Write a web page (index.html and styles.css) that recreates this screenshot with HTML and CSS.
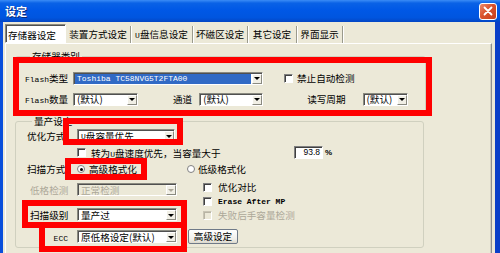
FILE: index.html
```html
<!DOCTYPE html>
<html lang="zh">
<head>
<meta charset="utf-8">
<title>设定</title>
<link rel="stylesheet" href="styles.css">
</head>
<body>
<div class="window">
  <div class="titlebar">
    <span class="title">设定</span>
    <span class="close"><svg width="10" height="10" viewBox="0 0 10 10"><path d="M1.5 1.5 L8.5 8.5 M8.5 1.5 L1.5 8.5" stroke="#fff" stroke-width="1.8" stroke-linecap="round"/></svg></span>
  </div>
  <div class="frame">
    <div class="tabs">
      <div class="tab sel">存储器设定</div>
      <div class="tab">装置方式设定</div>
      <div class="tab"><span class="lat">U</span>盘信息设定</div>
      <div class="tab">坏磁区设定</div>
      <div class="tab">其它设定</div>
      <div class="tab">界面显示</div>
    </div>
    <div class="panel">
      <fieldset class="grp g1">
        <legend>存储器类别</legend>
        <div class="row r1">
          <span class="lbl lw48"><span class="lat">Flash</span>类型</span>
          <div class="sel w190"><span class="val hl"><span class="lat">Toshiba TC58NVG5T2FTA00</span></span><span class="arr"></span></div>
          <span class="cb ml21"></span><span class="txt ml4">禁止自动检测</span>
        </div>
        <div class="row r2">
          <span class="lbl lw48"><span class="lat">Flash</span>数量</span>
          <div class="sel w65"><span class="val">(默认)</span><span class="arr"></span></div>
          <span class="txt ml35">通道</span>
          <div class="sel w64 ml7"><span class="val">(默认)</span><span class="arr"></span></div>
          <span class="txt ml44">读写周期</span>
          <div class="sel w45 ml17"><span class="val">(默认)</span><span class="arr"></span></div>
        </div>
      </fieldset>
      <fieldset class="grp g2">
        <legend>量产设定</legend>
        <div class="row ra">
          <span class="lbl lw50">优化方式</span>
          <div class="sel w98"><span class="val"><span class="lat">U</span>盘容量优先</span><span class="arr"></span></div>
        </div>
        <div class="row rb">
          <span class="lbl lw50"></span>
          <span class="cb"></span><span class="txt ml5 w203"><span>转为<span class="lat">U</span>盘速度优先，当容量大于</span></span>
          <span class="tb">93.8</span><span class="pct">%</span>
        </div>
        <div class="row rc">
          <span class="lbl lw50">扫描方式</span>
          <span class="rd on"></span><span class="txt ml4 w98">高级格式化</span>
          <span class="rd"></span><span class="txt ml3">低级格式化</span>
        </div>
        <div class="cols">
          <div class="lcol">
            <div class="row rd1">
              <span class="lbl lw50 in3 dis">低格检测</span>
              <div class="sel w100 dsel"><span class="val">正常检测</span><span class="arr"></span></div>
            </div>
            <div class="row rg">
              <span class="lbl lw50 in3">扫描级别</span>
              <div class="sel w100"><span class="val">量产过</span><span class="arr"></span></div>
            </div>
          </div>
          <div class="rcol">
            <div class="row rr"><span class="cb"></span><span class="txt ml6">优化对比</span></div>
            <div class="row rr"><span class="cb"></span><span class="txt ml6 lat b">Erase After MP</span></div>
            <div class="row rr"><span class="cb dcb"></span><span class="txt ml6 dis">失败后手容量检测</span></div>
          </div>
        </div>
        <div class="row rh">
          <span class="lbl lw50 rt"><span class="lat">ECC</span></span>
          <div class="sel w100"><span class="val">原低格设定(默认)</span><span class="arr"></span></div>
          <span class="btn">高级设定</span>
        </div>
      </fieldset>
    </div>
  </div>
  <div class="mark m1"></div>
  <div class="mark m2"></div>
  <div class="mark m3"></div>
  <div class="mark m4"></div>
  <div class="mark m5"></div>
</div>
</body>
</html>
```
FILE: styles.css
```css
* { box-sizing: border-box; }
html, body { margin: 0; padding: 0; }
body {
  width: 500px;
  height: 253px;
  overflow: hidden;
  background: #ECE9D8;
  font-family: "Noto Sans CJK SC", "Noto Sans", sans-serif;
  font-size: 9.6px;
  color: #000;
}
.window {
  position: relative;
  width: 500px;
  height: 253px;
  display: flex;
  flex-direction: column;
}
.titlebar {
  height: 22px;
  flex: none;
  display: flex;
  align-items: center;
  justify-content: space-between;
  padding: 0 3px 0 5px;
  background: linear-gradient(#3B8CF6 0%, #0A62E6 14%, #0058E6 45%, #0055DF 80%, #0446C4 100%);
}
.title {
  color: #fff;
  font-weight: bold;
  font-size: 11px;
  text-shadow: 1px 1px #0B2A7A;
}
.close {
  width: 18px;
  height: 17px;
  border: 1px solid #fff;
  border-radius: 3px;
  background: linear-gradient(135deg, #EE8A6C 0%, #D9532E 45%, #C8401C 100%);
  display: flex;
  align-items: center;
  justify-content: center;
}
.frame {
  flex: 1;
  display: flex;
  flex-direction: column;
  border-left: 3px solid #0A4FDB;
  border-right: 5px solid #0A3FC8;
  padding: 0 3px 0 2px;
  min-height: 0;
}
.tabs {
  height: 21px;
  flex: none;
  display: flex;
  align-items: flex-end;
}
.tab {
  height: 17px;
  line-height: 17px;
  text-align: center;
  border-right: 1px solid #9A9A8C;
  box-shadow: 1px 0 0 #fff;
  white-space: nowrap;
}
.tab:nth-child(1) { width: 61px; padding-left: 2px; height: 19px; line-height: 18px; }
.tab:nth-child(2) { width: 65px; }
.tab:nth-child(3) { width: 62px; }
.tab:nth-child(4) { width: 55px; }
.tab:nth-child(5) { width: 49px; }
.tab:nth-child(6) { width: 46px; }
.panel {
  flex: 1;
  border-top: 1px solid #fff;
  border-left: 1px solid #fff;
  border-right: 1px solid #8E8F8F;
  box-shadow: inset -1px 0 0 #D0CEC0;
  padding-left: 9px;
}
.grp {
  margin: 0;
  padding: 0;
  min-width: 0;
  border: 1px solid #D0D0BF;
  border-radius: 3px;
}
.grp legend {
  padding: 0 2px;
  margin-left: 5px;
  line-height: 12px;
  font-size: 9.6px;
}
.g1 {
  margin-top: 6px;
  width: 411px;
  height: 65px;
  padding: 9px 0 0 9px;
}
.g2 {
  width: 409px;
  height: 133px;
  padding: 1px 0 0 11px;
}
.row {
  display: flex;
  align-items: center;
  height: 14px;
  white-space: nowrap;
}
.r2 { margin-top: 7px; }
.ra { height: 13px; margin-top: 1px; }
.rb { height: 13px; margin-top: 4px; }
.rc { height: 12px; margin-top: 4px; }
.cols { display: flex; margin-top: 5px; }
.lcol { width: 176px; }
.rd1 { height: 13px; margin-top: 3px; }
.rg { height: 13px; margin-top: 12px; }
.rr { height: 14px; }
.rh { height: 15px; margin-top: 7px; }
.lbl { flex: none; }
.lw48 { width: 48px; }
.lw50 { width: 50px; }
.in3 { padding-left: 3px; }
.rt { text-align: right; padding-right: 9px; }
.lat { font-family: "Liberation Mono", monospace; font-size: 8px; }
.b { font-weight: bold; }
.dis { color: #ACA899; }
.txt { flex: none; }
.ml3 { margin-left: 3px; }
.ml4 { margin-left: 4px; }
.ml5 { margin-left: 5px; }
.ml6 { margin-left: 6px; }
.ml7 { margin-left: 7px; }
.ml17 { margin-left: 17px; }
.ml21 { margin-left: 21px; }
.ml35 { margin-left: 35px; }
.ml44 { margin-left: 44px; }
.w45 { width: 45px; }
.w64 { width: 64px; }
.w65 { width: 65px; }
.w98 { width: 98px; }
.w100 { width: 100px; }
.w190 { width: 190px; }
.w203 { width: 203px; }
.sel {
  flex: none;
  height: 13px;
  display: flex;
  align-items: stretch;
  background: #fff;
  border: 1px solid;
  border-color: #8A8A80 #fff #fff #8A8A80;
  box-shadow: inset 1px 1px 0 #505050;
  padding: 1px 0 0 1px;
}
.sel .val {
  flex: 1;
  display: flex;
  align-items: center;
  line-height: 11px;
  padding-left: 2px;
  white-space: nowrap;
}
.sel .val.hl {
  background: #316AC5;
  color: #fff;
  margin-right: 1px;
}
.arr {
  flex: none;
  width: 10px;
  background: #F1EFE6;
  border: 1px solid;
  border-color: #fff #8A8A80 #8A8A80 #fff;
  display: flex;
  align-items: center;
  justify-content: center;
}
.arr::after {
  content: "";
  border-left: 3px solid transparent;
  border-right: 3px solid transparent;
  border-top: 3px solid #000;
}
.dsel { background: #ECE9D8; color: #ACA899; }
.dsel .arr::after { border-top-color: #ACA899; }
.cb {
  flex: none;
  width: 9px;
  height: 9px;
  background: #fff;
  border: 1px solid;
  border-color: #808080 #fff #fff #808080;
  box-shadow: inset 1px 1px 0 #404040;
}
.dcb { background: #ECE9D8; box-shadow: inset 1px 1px 0 #B8B4A4; border-color: #C8C4B4 #fff #fff #C8C4B4; }
.rd {
  flex: none;
  width: 8px;
  height: 8px;
  border-radius: 50%;
  background: #fff;
  border: 1px solid #808080;
  display: flex;
  align-items: center;
  justify-content: center;
}
.rd.on::after {
  content: "";
  width: 3px;
  height: 3px;
  border-radius: 50%;
  background: #000;
}
.tb {
  flex: none;
  width: 29px;
  height: 13px;
  background: #fff;
  border: 1px solid;
  border-color: #808080 #fff #fff #808080;
  box-shadow: inset 1px 1px 0 #404040;
  font-family: "Liberation Sans", sans-serif;
  font-size: 8.5px;
  line-height: 11px;
  text-align: right;
  padding-right: 2px;
}
.pct { margin-left: 2px; font-family: "Liberation Sans", sans-serif; font-weight: bold; font-size: 8px; }
.btn {
  flex: none;
  width: 50px;
  height: 15px;
  margin-left: 11px;
  border: 1px solid #6F7A88;
  border-radius: 2px;
  background: linear-gradient(#FFFFFF, #F0EFEA 70%, #DCD9CC);
  text-align: center;
  line-height: 13px;
}
.mark {
  position: absolute;
  border: 6px solid #FF0000;
}
.m1 { left: 13px; top: 57px; width: 419px; height: 59px; }
.m2 { left: 63px; top: 118px; width: 120px; height: 27px; }
.m3 { left: 65px; top: 158px; width: 82px; height: 22px; }
.m4 { left: 22px; top: 200px; width: 165px; height: 28px; }
.m5 { left: 39px; top: 222px; width: 148px; height: 30px; }
```
